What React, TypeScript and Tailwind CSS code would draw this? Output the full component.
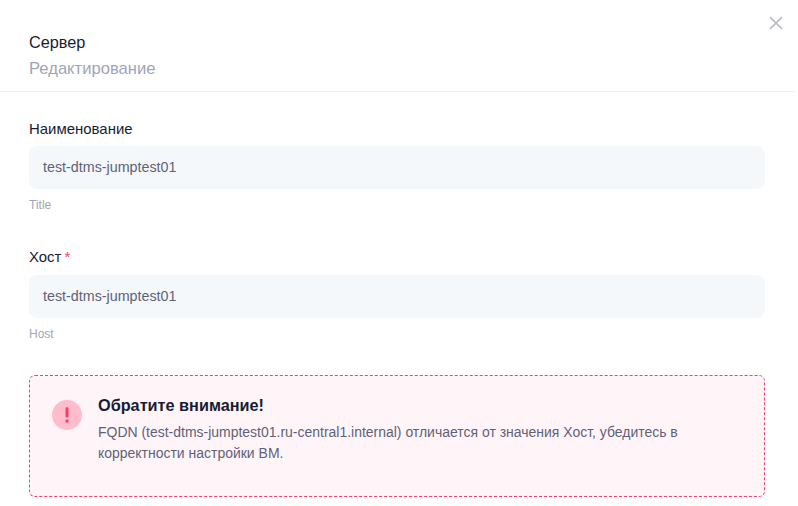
export default function App() {
  return (
    <div className="w-[798px] h-[506px] overflow-hidden bg-white relative font-['Liberation_Sans',sans-serif]">
      <button className="absolute top-[15px] right-[14px] text-[#b5b5c8]">
        <svg width="16" height="16" viewBox="0 0 16 16" fill="none" stroke="currentColor" strokeWidth="1.7"><path d="M2 2l12 12M14 2L2 14" /></svg>
      </button>
      <div className="w-[795px] h-[92px] border-b border-[#eff2f5] pl-[29px] pt-[32px]">
        <div className="text-[16.25px] leading-[20px] text-[#181c32]">Сервер</div>
        <div className="text-[16.6px] leading-[22px] mt-[6px] text-[#a1a5b7]">Редактирование</div>
      </div>
      <div className="pl-[29px] w-[765px] pt-[27px]">
        <div className="text-[14.95px] leading-[20px] text-[#181c32]">Наименование</div>
        <div className="mt-[7px] h-[43px] rounded-lg bg-[#f5f8fa] flex items-center px-[14px] text-[14.3px] text-[#5e6278]">test-dtms-jumptest01</div>
        <div className="mt-[9px] text-[12px] leading-[14px] text-[#a1a5b7]">Title</div>
        <div className="mt-[35px] text-[14.95px] leading-[20px] text-[#181c32]">Хост<span className="ml-[3px] text-[#f1416c]">*</span></div>
        <div className="mt-[8px] h-[43px] rounded-lg bg-[#f5f8fa] flex items-center px-[14px] text-[14.3px] text-[#5e6278]">test-dtms-jumptest01</div>
        <div className="mt-[9px] text-[12px] leading-[14px] text-[#a1a5b7]">Host</div>
        <div className="mt-[34px] h-[122px] rounded-md border border-dashed border-[#f1416c] bg-[#fff5f8] flex pl-[22px] pt-[18px]">
          <div className="w-[30px] h-[30px] mt-[6px] rounded-full bg-[#ffbccd] flex items-center justify-center shrink-0">
            <svg width="6" height="18" viewBox="0 0 6 18" fill="#f1416c"><rect x="1.5" y="1" width="3" height="10.5" rx="1.5" /><circle cx="3" cy="15" r="1.7" /></svg>
          </div>
          <div className="ml-[16px]">
            <div className="text-[16.25px] leading-[22px] font-bold text-[#181c32]">Обратите внимание!</div>
            <div className="mt-[6px] text-[13.97px] leading-[21px] text-[#5e6278] w-[620px]">FQDN (test-dtms-jumptest01.ru-central1.internal) отличается от значения Хост, убедитесь в корректности настройки ВМ.</div>
          </div>
        </div>
      </div>
    </div>
  );
}
